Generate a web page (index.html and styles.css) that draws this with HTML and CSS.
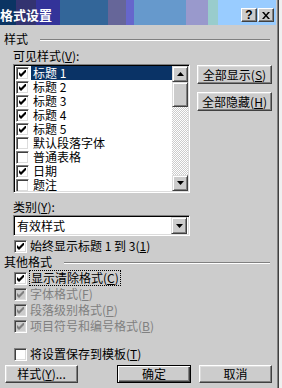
FILE: index.html
```html
<!DOCTYPE html>
<html lang="zh-CN">
<head>
    <meta charset="UTF-8">
    <title>格式设置</title>
    <link rel="stylesheet" href="styles.css">
</head>
<body>
    <svg class="defs" width="0" height="0">
        <symbol id="chk" viewBox="0 0 7 7"><path d="M0 2L2 4L7 -1V2L2 7L0 5Z"/></symbol>
        <symbol id="up" viewBox="0 0 7 4"><path d="M3.5 0L7 4H0Z"/></symbol>
        <symbol id="down" viewBox="0 0 7 4"><path d="M0 0H7L3.5 4Z"/></symbol>
    </svg>

    <div class="dialog">
        <!-- 제목줄 -->
        <div class="titlebar">
            <span class="title">格式设置</span>
            <span class="tbtns">
                <span class="tbtn">?</span>
                <span class="tbtn">
                    <svg width="8" height="7" viewBox="0 0 8 7"><path d="M0 0H2L4 2.5L6 0H8L5 3.5L8 7H6L4 4.5L2 7H0L3 3.5Z"/></svg>
                </span>
            </span>
        </div>

        <div class="group-label"><span>样式</span><i class="etch"></i></div>
        <div class="label">可见样式(<u>V</u>):</div>

        <div class="list-row">
            <div class="listbox">
                <ul class="items">
                    <li><span class="cb"><svg><use href="#chk"/></svg></span><span class="txt sel">标题 1</span></li>
                    <li><span class="cb"><svg><use href="#chk"/></svg></span><span class="txt">标题 2</span></li>
                    <li><span class="cb"><svg><use href="#chk"/></svg></span><span class="txt">标题 3</span></li>
                    <li><span class="cb"><svg><use href="#chk"/></svg></span><span class="txt">标题 4</span></li>
                    <li><span class="cb"><svg><use href="#chk"/></svg></span><span class="txt">标题 5</span></li>
                    <li><span class="cb"></span><span class="txt">默认段落字体</span></li>
                    <li><span class="cb"></span><span class="txt">普通表格</span></li>
                    <li><span class="cb"><svg><use href="#chk"/></svg></span><span class="txt">日期</span></li>
                    <li><span class="cb"></span><span class="txt">题注</span></li>
                </ul>
                <div class="scrollbar">
                    <span class="sbtn"><svg><use href="#up"/></svg></span>
                    <span class="thumb"></span>
                    <span class="track"></span>
                    <span class="sbtn"><svg><use href="#down"/></svg></span>
                </div>
            </div>
            <div class="side-btns">
                <div class="btn">全部显示(<u>S</u>)</div>
                <div class="btn">全部隐藏(<u>H</u>)</div>
            </div>
        </div>

        <div class="label cat">类别(<u>Y</u>):</div>
        <div class="select">
            <span class="sel-text">有效样式</span>
            <span class="sbtn"><svg><use href="#down"/></svg></span>
        </div>

        <div class="check-row first">
            <span class="cb"><svg><use href="#chk"/></svg></span>
            <span>始终显示标题 1 到 3(<u>1</u>)</span>
        </div>

        <div class="group-label other"><span>其他格式</span><i class="etch"></i></div>

        <div class="check-row">
            <span class="cb"><svg><use href="#chk"/></svg></span>
            <span class="focus">显示清除格式(<u>C</u>)</span>
        </div>
        <div class="check-row off">
            <span class="cb"><svg><use href="#chk"/></svg></span>
            <span>字体格式(<u>F</u>)</span>
        </div>
        <div class="check-row off">
            <span class="cb"><svg><use href="#chk"/></svg></span>
            <span>段落级别格式(<u>P</u>)</span>
        </div>
        <div class="check-row off">
            <span class="cb"><svg><use href="#chk"/></svg></span>
            <span>项目符号和编号格式(<u>B</u>)</span>
        </div>

        <div class="check-row save">
            <span class="cb"></span>
            <span>将设置保存到模板(<u>T</u>)</span>
        </div>

        <!-- 아래 버튼들 -->
        <div class="bottom">
            <div class="btn">样式(<u>Y</u>)...</div>
            <div class="btn default">确定</div>
            <div class="btn">取消</div>
        </div>
    </div>
</body>
</html>
```

FILE: styles.css
```css
/* 대화상자 공통 */
body {
    margin: 0;
    background: #f0f0f0;
    font-family: "Noto Sans CJK SC", "Liberation Sans", sans-serif;
    font-size: 12px;
    color: #000;
}

.defs {
    position: absolute;
}

u {
    text-decoration: underline;
}

.dialog {
    width: 276px;
    height: 388px;
    background: #cccccc;
    border-right: 1px solid #cccccc;
    box-shadow: 1px 0 #808080, 2px 0 #404040;
    overflow: hidden;
}

/* 제목줄 */
.titlebar {
    display: flex;
    justify-content: space-between;
    height: 25px;
    background: linear-gradient(to right,
        #0b3463 0 16px, #333370 16px 36px, #333399 36px 60px,
        #336699 60px 108px, #666699 108px 126px, #6666cc 126px 134px,
        #6699cc 134px 186px, #9999cc 186px 208px, #99cccc 208px 218px,
        #99ccff 218px);
}

.title {
    margin-top: 8px;
    line-height: 14px;
    font-size: 13px;
    font-weight: bold;
    color: #fff;
}

.tbtns {
    display: flex;
    gap: 1px;
    margin: 8px 2px 0 0;
}

.tbtn {
    box-sizing: border-box;
    width: 16px;
    height: 14px;
    display: flex;
    align-items: center;
    justify-content: center;
    background: #cccccc;
    border: 1px solid;
    border-color: #fff #404040 #404040 #fff;
    box-shadow: inset -1px -1px #808080;
    font-family: "Liberation Sans", sans-serif;
    font-weight: bold;
    font-size: 12px;
    line-height: 1;
}

/* 그룹 제목 + 선 */
.group-label {
    display: flex;
    align-items: center;
    margin-top: 7px;
    padding-left: 4px;
    line-height: 14px;
}

.etch {
    flex: 1;
    height: 0;
    margin: 1px 6px 0 12px;
    border-top: 1px solid #808080;
    border-bottom: 1px solid #fff;
}

.group-label.other {
    margin-top: 1px;
}

.label {
    margin-top: 3px;
    padding-left: 13px;
    line-height: 14px;
}

/* 리스트박스 */
.list-row {
    display: flex;
    margin-top: 1px;
    padding-left: 13px;
}

.listbox {
    box-sizing: border-box;
    display: flex;
    width: 177px;
    height: 129px;
    border: 1px solid;
    border-color: #808080 #fff #fff #808080;
    box-shadow: inset 1px 1px #000, inset -1px -1px #dcdcdc;
    padding: 1px;
    background: #fff;
}

.items {
    flex: 1;
    margin: 0;
    padding: 0;
    list-style: none;
    overflow: hidden;
}

.items li {
    display: flex;
    align-items: center;
    height: 14px;
}

.items .cb {
    margin-left: 1px;
}

.txt {
    flex: 1;
    margin-left: 2px;
    padding-left: 2px;
    line-height: 14px;
}

.txt.sel {
    background: #0a3366;
    color: #fff;
}

/* 체크박스 */
.cb {
    box-sizing: border-box;
    flex: none;
    width: 13px;
    height: 13px;
    display: flex;
    align-items: center;
    justify-content: center;
    border: 1px solid;
    border-color: #808080 #fff #fff #808080;
    box-shadow: inset 1px 1px #404040, inset -1px -1px #dcdcdc;
    background: #fff;
}

.cb svg {
    width: 7px;
    height: 7px;
    fill: #000;
}

/* 스크롤바 */
.scrollbar {
    display: flex;
    flex-direction: column;
    width: 16px;
}

.sbtn {
    box-sizing: border-box;
    flex: none;
    width: 16px;
    height: 16px;
    display: flex;
    align-items: center;
    justify-content: center;
    background: #cccccc;
    border: 1px solid;
    border-color: #dcdcdc #404040 #404040 #dcdcdc;
    box-shadow: inset 1px 1px #fff, inset -1px -1px #808080;
}

.sbtn svg {
    width: 7px;
    height: 4px;
    fill: #000;
}

.thumb {
    box-sizing: border-box;
    height: 25px;
    background: #cccccc;
    border: 1px solid;
    border-color: #dcdcdc #404040 #404040 #dcdcdc;
    box-shadow: inset 1px 1px #fff, inset -1px -1px #808080;
}

.track {
    flex: 1;
    background-image: conic-gradient(#fff 25%, #cccccc 0 50%, #fff 0 75%, #cccccc 0);
    background-size: 2px 2px;
}

/* 버튼 */
.btn {
    box-sizing: border-box;
    height: 19px;
    display: flex;
    align-items: center;
    justify-content: center;
    background: #cccccc;
    border: 1px solid;
    border-color: #fff #404040 #404040 #fff;
    box-shadow: inset -1px -1px #808080, inset 1px 1px #dcdcdc;
    line-height: 14px;
}

.btn.default {
    border-color: #000;
    box-shadow: inset 1px 1px #fff, inset -1px -1px #404040, inset -2px -2px #808080;
}

.side-btns {
    display: flex;
    flex-direction: column;
    gap: 8px;
    width: 75px;
    margin: 1px 0 0 7px;
}

/* 드롭다운 */
.label.cat {
    margin-top: 7px;
}

.select {
    box-sizing: border-box;
    display: flex;
    align-items: center;
    width: 177px;
    height: 21px;
    margin: 1px 0 0 13px;
    padding: 2px;
    border: 1px solid;
    border-color: #808080 #fff #fff #808080;
    box-shadow: inset 1px 1px #000, inset -1px -1px #dcdcdc;
    background: #fff;
}

.sel-text {
    flex: 1;
    padding-left: 1px;
    line-height: 14px;
}

.select .sbtn {
    height: 17px;
}

/* 체크 행 */
.check-row {
    display: flex;
    align-items: center;
    height: 16px;
    padding-left: 14px;
    line-height: 14px;
}

.check-row .cb {
    margin-right: 3px;
}

.check-row.first {
    margin-top: 2px;
}

.group-label.other + .check-row {
    margin-top: 1px;
}

.focus {
    outline: 1px dotted #000;
    outline-offset: 0;
    padding: 0 1px;
}

.check-row.off {
    color: #808080;
}

.check-row.off .cb {
    background: #cccccc;
}

.check-row.off .cb svg {
    fill: #808080;
}

.check-row.save {
    margin-top: 12px;
}

.bottom {
    display: flex;
    gap: 8px;
    margin-top: 3px;
    padding-left: 5px;
}

.bottom .btn {
    width: 73px;
    height: 18px;
}

.bottom .btn.default {
    width: 74px;
    margin-left: 31px;
}
```
